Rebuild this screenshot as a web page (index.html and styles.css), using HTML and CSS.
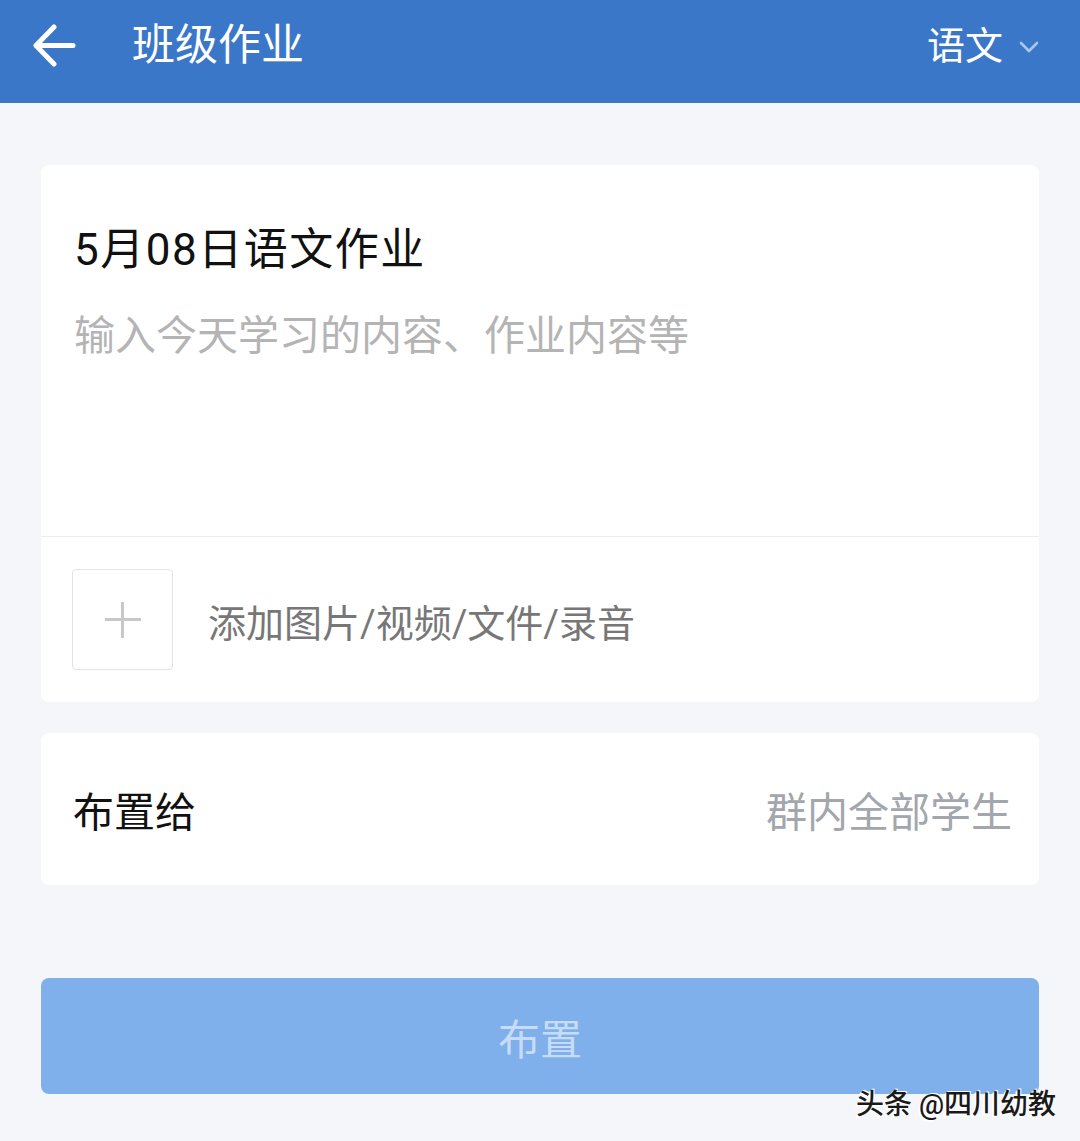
FILE: index.html
```html
<!DOCTYPE html>
<html lang="zh-CN">
<head>
    <meta charset="UTF-8">
    <meta name="viewport" content="width=device-width, initial-scale=1.0">
    <title>班级作业</title>
    <link rel="stylesheet" href="styles.css">
</head>
<body>
    <header class="topbar">
        <button class="back" type="button" aria-label="返回">
            <svg width="44" height="44" viewBox="0 0 44 44">
                <path d="M22 3 L4 21.5 L22 40 M4 21.5 H41" fill="none" stroke="#fff" stroke-width="5" stroke-linecap="round" stroke-linejoin="round"/>
            </svg>
        </button>
        <h1 class="topbar-title">班级作业</h1>
        <div class="subject">
            <span>语文</span>
            <svg width="20" height="12" viewBox="0 0 20 12">
                <path d="M2 2 L10 10 L18 2" fill="none" stroke="#a8c6ee" stroke-width="2.6" stroke-linecap="round" stroke-linejoin="round"/>
            </svg>
        </div>
    </header>

    <main class="content">
        <section class="card editor">
            <div class="editor-body">
                <div class="hw-title">5月08日语文作业</div>
                <div class="hw-placeholder">输入今天学习的内容、作业内容等</div>
            </div>
            <div class="attach">
                <div class="attach-box">
                    <span class="plus"></span>
                </div>
                <span class="attach-text">添加图片/视频/文件/录音</span>
            </div>
        </section>

        <section class="card assign">
            <span class="assign-label">布置给</span>
            <span class="assign-value">群内全部学生</span>
        </section>

        <button class="submit" type="button">布置</button>
    </main>

    <div class="watermark">头条 @四川幼教</div>
</body>
</html>
```

FILE: styles.css
```css
* {
  padding: 0;
  margin: 0;
  box-sizing: border-box;
}

body {
  background-color: #f5f6fa;
  font-family: Roboto, "Noto Sans CJK SC", sans-serif;
  width: 1080px;
  height: 1141px;
  position: relative;
  overflow: hidden;
}

.topbar {
  height: 103px;
  background-color: #3b77c8;
  display: flex;
  align-items: center;
  padding: 0 41px 12px 32px;
  color: #fff;
}

.back {
  background: none;
  border: none;
  width: 44px;
  height: 44px;
  display: flex;
}

.topbar-title {
  font-size: 43px;
  font-weight: 400;
  margin-left: 56px;
  flex: 1;
  line-height: 1;
}

.subject {
  display: flex;
  align-items: center;
  gap: 16px;
  font-size: 38px;
  line-height: 1;
}

.subject svg {
  margin-top: 2px;
}

.content {
  padding: 62px 41px 0;
}

.card {
  background: #fff;
  border-radius: 8px;
}

.editor-body {
  height: 372px;
  padding: 55px 33px 0;
  border-bottom: 1px solid #ececec;
}

.hw-title {
  font-size: 44px;
  line-height: 60px;
  letter-spacing: 1.5px;
  color: #111;
}

.hw-placeholder {
  margin-top: 28px;
  font-size: 41px;
  line-height: 56px;
  color: #b4b4b4;
}

.attach {
  display: flex;
  align-items: center;
  padding: 32px 31px;
  gap: 35px;
}

.attach-box {
  width: 101px;
  height: 101px;
  border: 1px solid #e3e3e3;
  border-radius: 4px;
  display: flex;
  align-items: center;
  justify-content: center;
}

.plus {
  width: 36px;
  height: 36px;
  position: relative;
}

.plus::before,
.plus::after {
  content: "";
  position: absolute;
  background: #c8c8c8;
}

.plus::before {
  left: 0;
  right: 0;
  top: 16.5px;
  height: 3px;
}

.plus::after {
  top: 0;
  bottom: 0;
  left: 16.5px;
  width: 3px;
}

.attach-text {
  font-size: 38px;
  color: #777;
  padding-top: 2px;
}

.assign {
  margin-top: 31px;
  height: 152px;
  display: flex;
  align-items: center;
  justify-content: space-between;
  padding: 0 27px 0 32px;
  font-size: 41px;
}

.assign-label {
  color: #111;
}

.assign-value {
  color: #a2a6ad;
}

.submit {
  margin-top: 93px;
  width: 100%;
  height: 116px;
  border: none;
  border-radius: 8px;
  background: #7fb0ec;
  color: #c6dcf7;
  font-family: Roboto, "Noto Sans CJK SC", sans-serif;
  font-size: 42px;
  display: block;
}

.watermark {
  position: absolute;
  right: 24px;
  bottom: 22px;
  font-size: 28px;
  font-weight: 500;
  color: #1a1a1a;
  line-height: 1;
  text-shadow: -1px 1px 0 #fff, -2px 2px 0 #fff, 1px -1px 0 #fff;
}
```
